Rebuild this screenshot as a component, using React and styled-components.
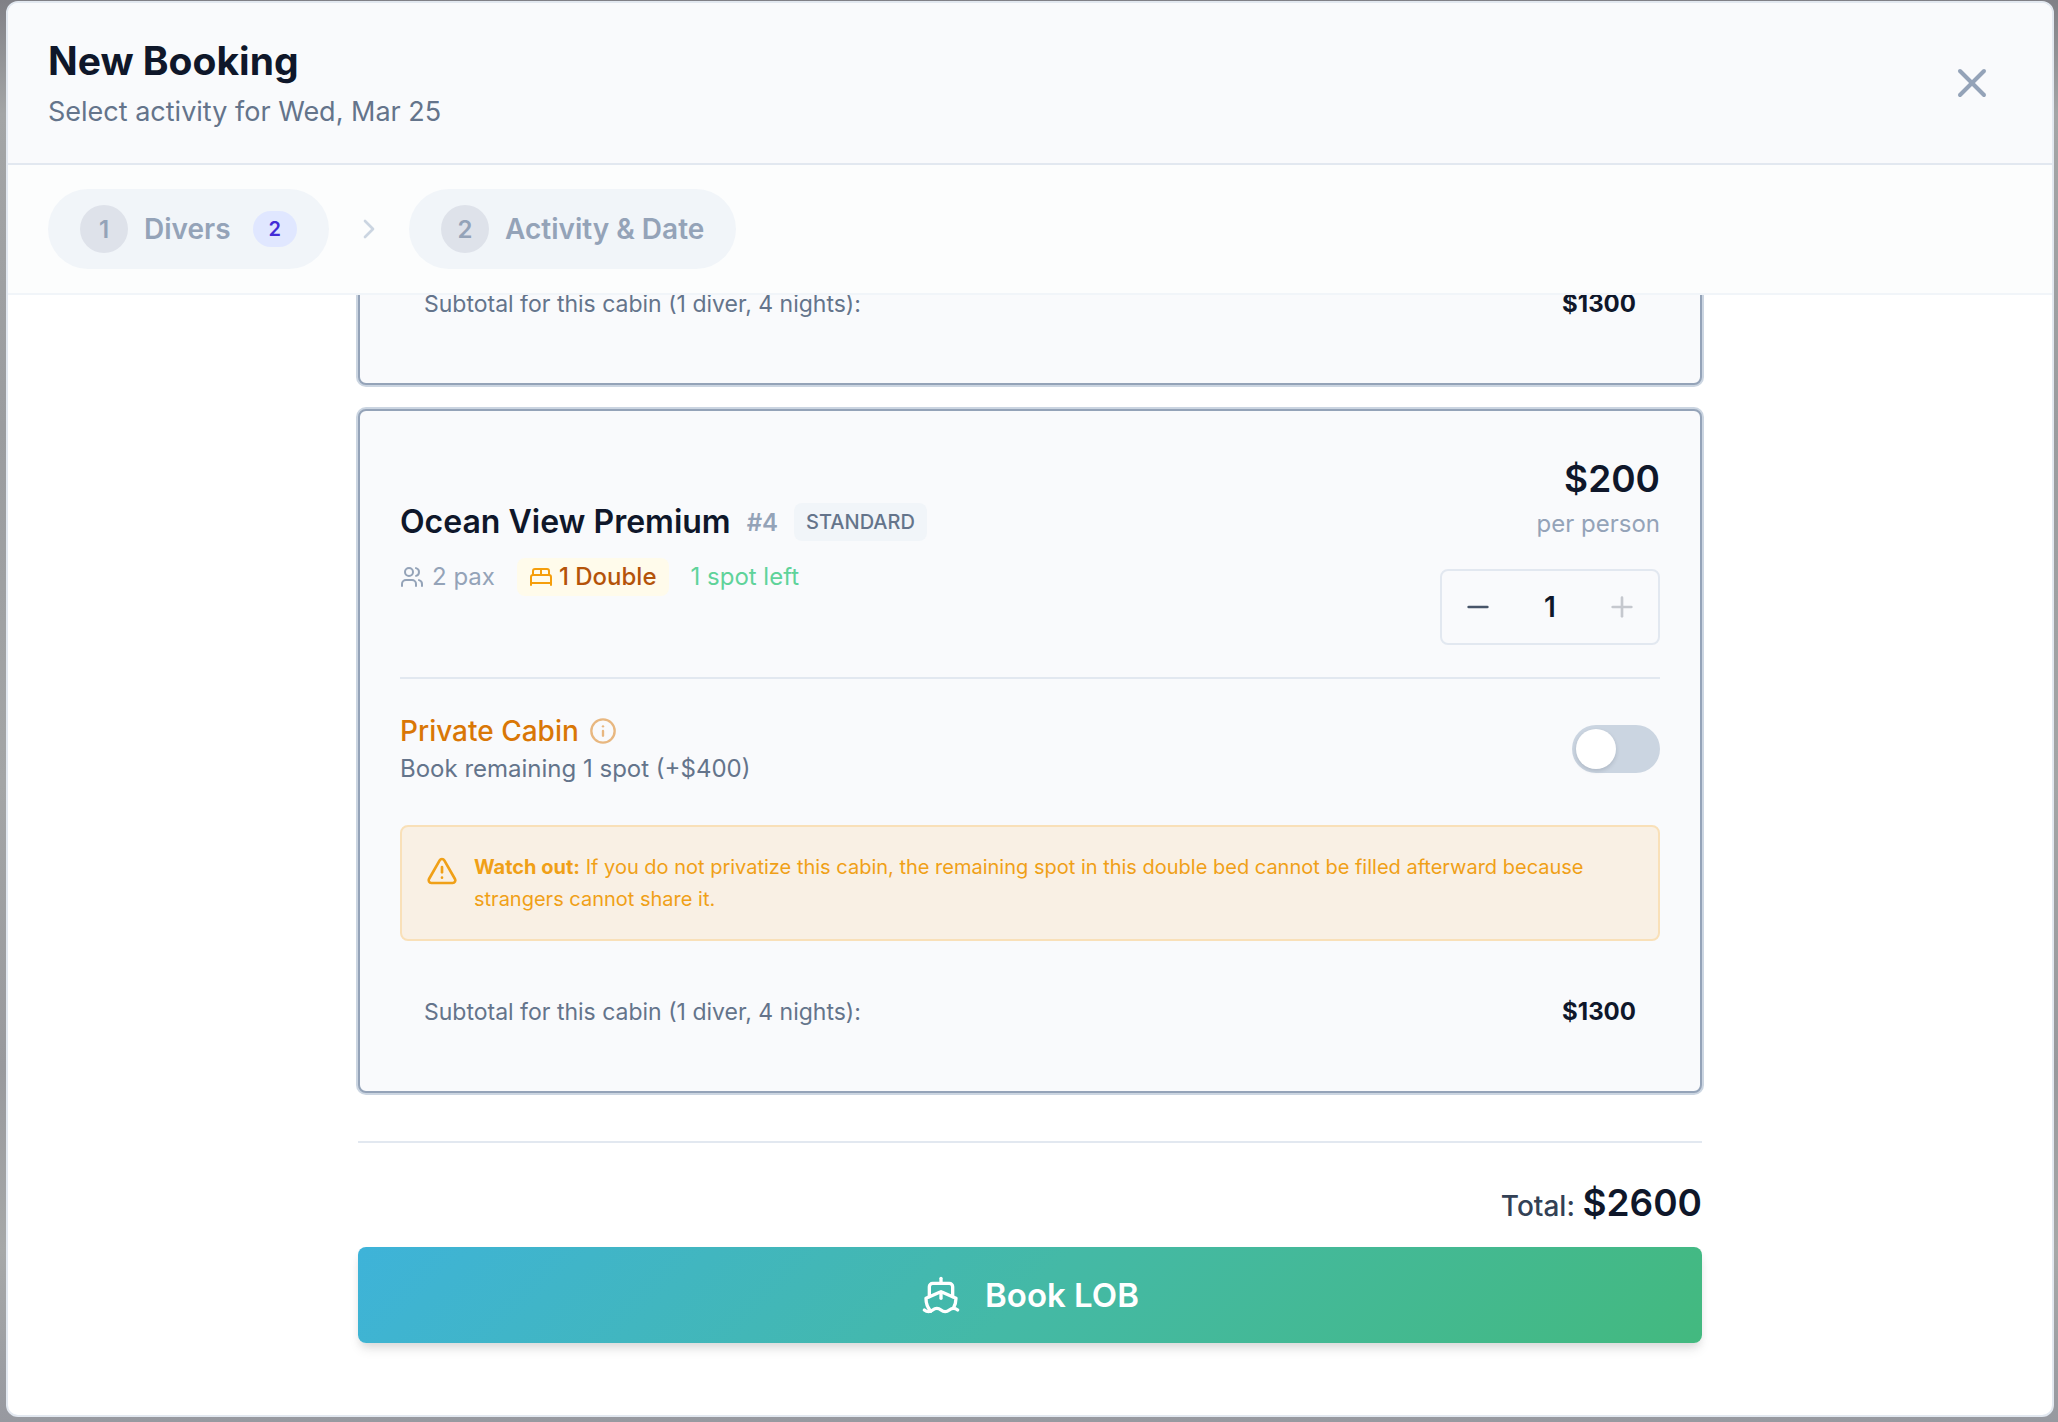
import React, { useLayoutEffect, useRef, useState } from 'react';
import styled, { createGlobalStyle } from 'styled-components';
import { AlertTriangle, BedDouble, ChevronRight, Info, Minus, Plus, Ship, Users, X } from 'lucide-react';

const GlobalStyle = createGlobalStyle`
  *, *::before, *::after {
    box-sizing: border-box;
  }

  body {
    margin: 0;
    font-family: Inter, 'Liberation Sans', sans-serif;
    color: #0f172a;
  }

  h2, h3, p {
    margin: 0;
  }

  button {
    font-family: inherit;
    cursor: pointer;
  }
`;

const Backdrop = styled.div`
  height: 100vh;
  padding: 1px 4px 5px 6px;
  background: linear-gradient(180deg, #808086 0%, #a3a5a6 8%, #9a9c9f 30%, #a3a5a6 55%, #98999d 75%, #a6a8a8 88%, #9799a0 100%);
`;

const Modal = styled.div`
  display: flex;
  flex-direction: column;
  height: 100%;
  overflow: hidden;
  background: #ffffff;
  border: 2px solid #e2e8f0;
  border-radius: 12px;
`;

const ModalHeader = styled.header`
  display: flex;
  align-items: center;
  justify-content: space-between;
  padding: 32px 40px;
  background: #f9fafc;
  border-bottom: 2px solid #e2e8f0;
`;

const HeaderText = styled.div`
  display: flex;
  flex-direction: column;
  gap: 6px;
`;

const Title = styled.h2`
  font-size: 39px;
  font-weight: 700;
  line-height: 52px;
`;

const Subtitle = styled.p`
  font-size: 27px;
  line-height: 38px;
  color: #64748b;
`;

const CloseButton = styled.button`
  display: flex;
  padding: 16px;
  background: none;
  border: none;
  color: #94a3b8;
`;

const Steps = styled.nav`
  display: flex;
  align-items: center;
  gap: 24px;
  padding: 24px 40px;
  background: #fcfdfd;
  border-bottom: 2px solid #f1f5f9;
  color: #cbd5e1;
`;

const Step = styled.button`
  display: flex;
  align-items: center;
  gap: 16px;
  height: 80px;
  padding: 16px 32px;
  background: #f1f5f9;
  border: none;
  border-radius: 40px;
  font-size: 28px;
  font-weight: 600;
  color: #94a3b8;
`;

const StepNumber = styled.span`
  display: flex;
  align-items: center;
  justify-content: center;
  width: 48px;
  height: 48px;
  background: #dee2ea;
  border-radius: 50%;
  font-size: 24px;
`;

const StepCount = styled.span`
  margin-left: 6px;
  padding: 0 16px;
  background: #e0e7ff;
  border-radius: 18px;
  font-size: 20px;
  line-height: 36px;
  color: #432dd7;
`;

const ModalBody = styled.div`
  flex: 1;
  min-height: 0;
  overflow-y: auto;
  scrollbar-width: none;
`;

const Content = styled.div`
  display: flex;
  flex-direction: column;
  gap: 24px;
  max-width: 1344px;
  margin: 0 auto;
  padding-bottom: 72px;
`;

const CabinCard = styled.section`
  padding: 40px;
  background: #f9fafc;
  border: 2px solid #94a3b8;
  border-radius: 8px;
  box-shadow: 0 0 0 2px #cbd5e1;
`;

const CabinHeader = styled.div`
  display: flex;
  align-items: center;
  justify-content: space-between;
  padding-bottom: 32px;
  border-bottom: 2px solid #e2e8f0;
`;

const CabinInfo = styled.div`
  display: flex;
  flex-direction: column;
  gap: 14px;
`;

const CabinTitleRow = styled.div`
  display: flex;
  align-items: center;
  gap: 16px;
`;

const CabinName = styled.h3`
  font-size: 32px;
  font-weight: 600;
  line-height: 44px;
`;

const CabinNumber = styled.span`
  font-size: 24px;
  font-weight: 600;
  color: #94a3b8;
`;

const Tag = styled.span`
  padding: 0 12px;
  background: #f1f5f9;
  border-radius: 8px;
  font-size: 20px;
  font-weight: 500;
  line-height: 38px;
  color: #64748b;
`;

const CabinMeta = styled.div`
  display: flex;
  align-items: center;
  gap: 22px;
  font-size: 24px;
  line-height: 38px;
`;

const Capacity = styled.span`
  display: flex;
  align-items: center;
  gap: 8px;
  color: #94a3b8;
`;

const BedTag = styled.span`
  display: flex;
  align-items: center;
  gap: 6px;
  padding: 0 12px;
  background: #fffbeb;
  border-radius: 8px;
  font-weight: 500;
  color: #b45309;

  svg {
    color: #f59e0b;
  }
`;

const SpotsLeft = styled.span`
  color: #5fd39a;
`;

const PriceColumn = styled.div`
  display: flex;
  flex-direction: column;
  align-items: flex-end;
`;

const Price = styled.span`
  font-size: 37px;
  font-weight: 600;
  line-height: 56px;
`;

const PriceUnit = styled.span`
  margin-bottom: 28px;
  font-size: 24px;
  line-height: 34px;
  color: #94a3b8;
`;

const Stepper = styled.div`
  display: grid;
  grid-template-columns: 72px 72px 72px;
  align-items: center;
  height: 76px;
  border: 2px solid #e2e8f0;
  border-radius: 8px;
`;

const StepperButton = styled.button`
  display: flex;
  align-items: center;
  justify-content: center;
  height: 72px;
  padding: 0;
  background: none;
  border: none;
  color: #475569;

  &:disabled {
    color: #c5c8ce;
    cursor: default;
  }
`;

const StepperValue = styled.output`
  font-size: 28px;
  font-weight: 600;
  text-align: center;
`;

const PrivateRow = styled.div`
  display: flex;
  align-items: center;
  justify-content: space-between;
  padding: 32px 0 38px;
`;

const PrivateTitle = styled.div`
  display: flex;
  align-items: center;
  gap: 10px;
  font-size: 28px;
  font-weight: 500;
  line-height: 40px;
  color: #d97706;

  svg {
    opacity: 0.5;
  }
`;

const PrivateHint = styled.p`
  font-size: 24px;
  line-height: 36px;
  color: #64748b;
`;

const Toggle = styled.input`
  appearance: none;
  width: 88px;
  height: 48px;
  margin: 0;
  padding: 4px;
  background: #cbd5e1;
  border-radius: 24px;
  cursor: pointer;
  transition: background 0.2s;

  &::before {
    content: '';
    display: block;
    width: 40px;
    height: 40px;
    background: #ffffff;
    border-radius: 50%;
    box-shadow: 0 2px 4px rgba(15, 23, 42, 0.15);
    transition: margin 0.2s;
  }

  &:checked {
    background: #d97706;
  }

  &:checked::before {
    margin-left: 40px;
  }
`;

const Warning = styled.div`
  display: flex;
  gap: 16px;
  padding: 24px;
  background: #f9f0e4;
  border: 2px solid #f9e0b8;
  border-radius: 8px;
  font-size: 20px;
  line-height: 32px;
  color: #f0a017;

  svg {
    flex-shrink: 0;
    margin-top: 4px;
  }
`;

const SubtotalRow = styled.div`
  display: flex;
  justify-content: space-between;
  padding: 20px 24px;
  font-size: 23px;
  line-height: 38px;
  color: #64748b;

  ${Warning} + & {
    margin-top: 32px;
  }
`;

const SubtotalAmount = styled.span`
  font-size: 24px;
  font-weight: 700;
  color: #0f172a;
`;

const Summary = styled.div`
  margin-top: 24px;
  padding-top: 32px;
  border-top: 2px solid #e2e8f0;
`;

const Total = styled.p`
  margin-bottom: 16px;
  font-size: 28px;
  font-weight: 500;
  line-height: 40px;
  text-align: right;
  color: #334155;
`;

const TotalAmount = styled.span`
  font-size: 37px;
  font-weight: 600;
  line-height: 56px;
  color: #0f172a;
`;

const BookButton = styled.button`
  display: flex;
  align-items: center;
  justify-content: center;
  gap: 24px;
  width: 100%;
  height: 96px;
  background: linear-gradient(135deg, #3eb3d9 0%, #44b9a6 50%, #43b97f 100%);
  border: none;
  border-radius: 8px;
  box-shadow: 0 8px 12px -2px rgba(0, 0, 0, 0.1), 0 4px 8px -2px rgba(0, 0, 0, 0.08);
  font-size: 33px;
  font-weight: 600;
  color: #ffffff;
`;

const Subtotal = ({ amount }) => (
  <SubtotalRow>
    <span>Subtotal for this cabin (1 diver, 4 nights):</span>
    <SubtotalAmount>${amount}</SubtotalAmount>
  </SubtotalRow>
);

const App = () => {
  const bodyRef = useRef(null);
  const [divers, setDivers] = useState(1);
  const [isPrivate, setIsPrivate] = useState(false);

  useLayoutEffect(() => {
    bodyRef.current.scrollTop = bodyRef.current.scrollHeight;
  }, []);

  return (
    <>
      <GlobalStyle />
      <Backdrop>
        <Modal role="dialog" aria-labelledby="booking-title">
          <ModalHeader>
            <HeaderText>
              <Title id="booking-title">New Booking</Title>
              <Subtitle>Select activity for Wed, Mar 25</Subtitle>
            </HeaderText>
            <CloseButton type="button" aria-label="Close">
              <X size={48} />
            </CloseButton>
          </ModalHeader>

          <Steps>
            <Step type="button">
              <StepNumber>1</StepNumber>
              Divers
              <StepCount>2</StepCount>
            </Step>
            <ChevronRight size={32} />
            <Step type="button">
              <StepNumber>2</StepNumber>
              Activity &amp; Date
            </Step>
          </Steps>

          <ModalBody ref={bodyRef}>
            <Content>
              <CabinCard>
                <Subtotal amount={1300} />
              </CabinCard>

              <CabinCard>
                <CabinHeader>
                  <CabinInfo>
                    <CabinTitleRow>
                      <CabinName>Ocean View Premium</CabinName>
                      <CabinNumber>#4</CabinNumber>
                      <Tag>STANDARD</Tag>
                    </CabinTitleRow>
                    <CabinMeta>
                      <Capacity>
                        <Users size={24} />
                        2 pax
                      </Capacity>
                      <BedTag>
                        <BedDouble size={24} />
                        1 Double
                      </BedTag>
                      <SpotsLeft>1 spot left</SpotsLeft>
                    </CabinMeta>
                  </CabinInfo>
                  <PriceColumn>
                    <Price>$200</Price>
                    <PriceUnit>per person</PriceUnit>
                    <Stepper>
                      <StepperButton type="button" aria-label="Remove diver" onClick={() => setDivers(Math.max(0, divers - 1))}>
                        <Minus size={32} />
                      </StepperButton>
                      <StepperValue>{divers}</StepperValue>
                      <StepperButton type="button" aria-label="Add diver" disabled={divers >= 1} onClick={() => setDivers(divers + 1)}>
                        <Plus size={32} />
                      </StepperButton>
                    </Stepper>
                  </PriceColumn>
                </CabinHeader>

                <PrivateRow>
                  <div>
                    <PrivateTitle>
                      <label htmlFor="private-cabin">Private Cabin</label>
                      <Info size={28} />
                    </PrivateTitle>
                    <PrivateHint>Book remaining 1 spot (+$400)</PrivateHint>
                  </div>
                  <Toggle
                    id="private-cabin"
                    type="checkbox"
                    checked={isPrivate}
                    onChange={e => setIsPrivate(e.target.checked)}
                  />
                </PrivateRow>

                <Warning>
                  <AlertTriangle size={32} />
                  <p>
                    <strong>Watch out:</strong> If you do not privatize this cabin, the remaining spot in this double bed cannot be filled afterward because strangers cannot share it.
                  </p>
                </Warning>

                <Subtotal amount={1300} />
              </CabinCard>

              <Summary>
                <Total>
                  Total: <TotalAmount>$2600</TotalAmount>
                </Total>
                <BookButton type="button">
                  <Ship size={40} />
                  Book LOB
                </BookButton>
              </Summary>
            </Content>
          </ModalBody>
        </Modal>
      </Backdrop>
    </>
  );
};

export default App;
